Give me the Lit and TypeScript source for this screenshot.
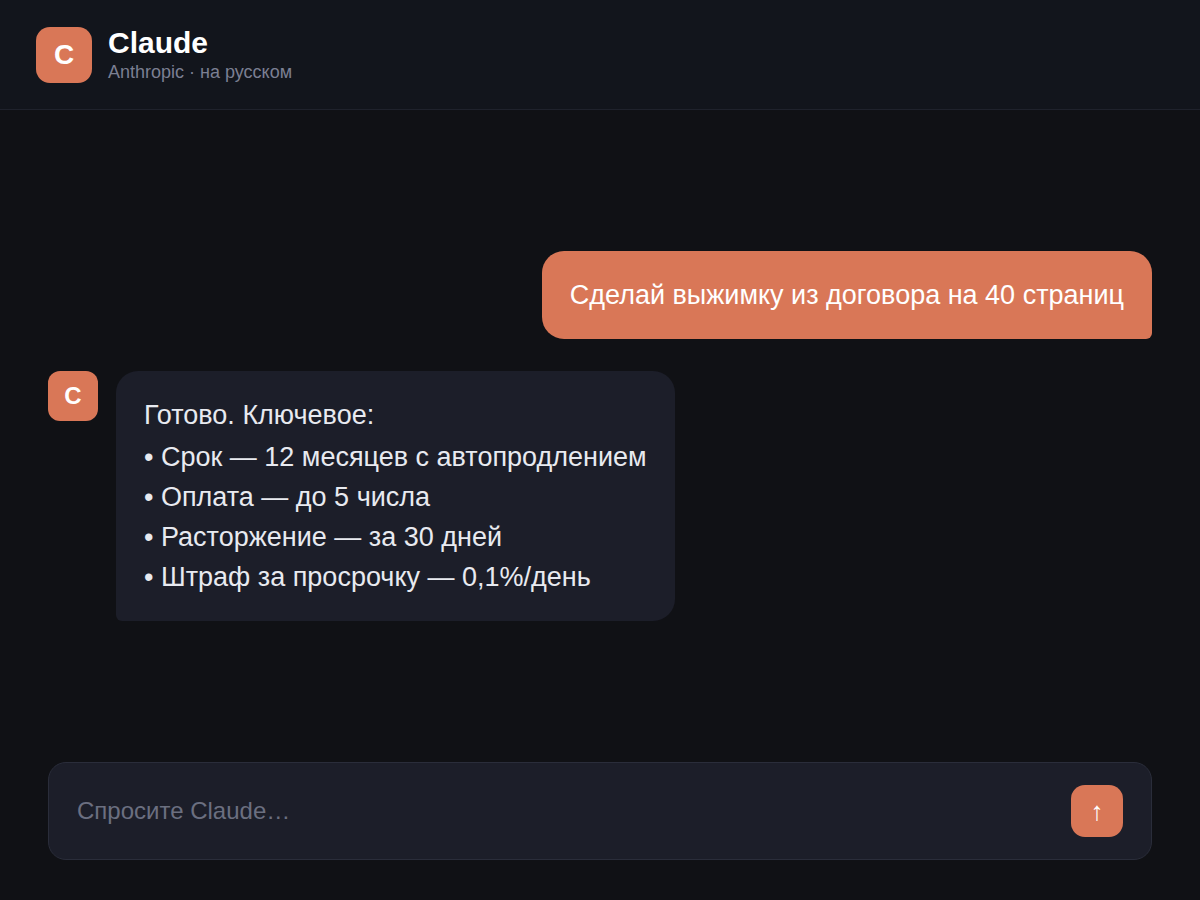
import { LitElement, html, css } from "lit";
import { customElement, state } from "lit/decorators.js";

interface Message {
  from: "user" | "assistant";
  text: string;
  points?: string[];
}

@customElement("chat-message")
class ChatMessage extends LitElement {
  static properties = { message: { attribute: false } };
  declare message: Message;

  static styles = css`
    :host {
      display: block;
    }
    .row {
      display: flex;
      align-items: flex-start;
      gap: 18px;
    }
    .row.user {
      justify-content: flex-end;
    }
    .avatar {
      flex: none;
      display: grid;
      place-items: center;
      width: 50px;
      height: 50px;
      border-radius: 12px;
      background: #d97757;
      color: #fff;
      font-size: 24px;
      font-weight: 700;
    }
    .bubble {
      max-width: 78%;
      box-sizing: border-box;
      padding: 24px 28px;
      border-radius: 22px;
      font-size: 27px;
      line-height: 40px;
    }
    .user .bubble {
      background: #d97757;
      color: #fff;
      border-bottom-right-radius: 6px;
    }
    .assistant .bubble {
      background: #1c1e29;
      color: #e8eaf0;
      border-bottom-left-radius: 6px;
    }
    .text {
      margin: 0;
    }
    .points {
      list-style: none;
      margin: 2px 0 0;
      padding: 0;
    }
  `;

  render() {
    const { from, text, points } = this.message;
    return html`
      <article class="row ${from}">
        ${from === "assistant" ? html`<div class="avatar" aria-hidden="true">C</div>` : ""}
        <div class="bubble">
          <p class="text">${text}</p>
          ${points
            ? html`<ul class="points">
                ${points.map((point) => html`<li>• ${point}</li>`)}
              </ul>`
            : ""}
        </div>
      </article>
    `;
  }
}

@customElement("app-root")
class AppRoot extends LitElement {
  static styles = css`
    :host {
      display: flex;
      flex-direction: column;
      min-height: 100vh;
      box-sizing: border-box;
      background: #101115;
      color: #e8eaf0;
      font-family: "Liberation Sans", Arial, sans-serif;
    }
    .header {
      display: flex;
      align-items: center;
      gap: 16px;
      padding: 27px 36px 26px;
      border-bottom: 1px solid #1f222c;
      background: #12151c;
    }
    .logo {
      flex: none;
      display: grid;
      place-items: center;
      width: 56px;
      height: 56px;
      border-radius: 14px;
      background: #d97757;
      color: #fff;
      font-size: 28px;
      font-weight: 700;
    }
    .title {
      margin: 0;
      color: #fff;
      font-size: 30px;
      line-height: 32px;
      font-weight: 700;
    }
    .subtitle {
      margin: 0;
      padding-top: 2px;
      color: #7b7f92;
      font-size: 18px;
      line-height: 22px;
    }
    .thread {
      flex: 1;
      display: flex;
      flex-direction: column;
      justify-content: center;
      gap: 32px;
      padding: 0 48px;
    }
    .composer {
      display: flex;
      align-items: center;
      gap: 16px;
      margin: 0 48px 40px;
      padding: 22px 28px;
      border: 1px solid #2a2d3a;
      border-radius: 18px;
      background: #1c1e29;
    }
    .field {
      flex: 1;
      min-width: 0;
      padding: 0;
      border: 0;
      outline: 0;
      background: none;
      color: #e8eaf0;
      font: inherit;
      font-size: 24px;
    }
    .field::placeholder {
      color: #6b6f80;
      opacity: 1;
    }
    .send {
      flex: none;
      display: grid;
      place-items: center;
      width: 52px;
      height: 52px;
      padding: 0;
      border: 0;
      border-radius: 14px;
      background: #d97757;
      color: #fff;
      font: inherit;
      font-size: 26px;
      cursor: pointer;
    }
  `;

  @state() private messages: Message[] = [
    { from: "user", text: "Сделай выжимку из договора на 40 страниц" },
    {
      from: "assistant",
      text: "Готово. Ключевое:",
      points: [
        "Срок — 12 месяцев с автопродлением",
        "Оплата — до 5 числа",
        "Расторжение — за 30 дней",
        "Штраф за просрочку — 0,1%/день",
      ],
    },
  ];

  private submit(event: Event) {
    event.preventDefault();
    const field = this.renderRoot.querySelector<HTMLInputElement>(".field")!;
    const text = field.value.trim();
    if (!text) return;
    this.messages = [...this.messages, { from: "user", text }];
    field.value = "";
  }

  render() {
    return html`
      <header class="header">
        <div class="logo" aria-hidden="true">C</div>
        <div>
          <h1 class="title">Claude</h1>
          <p class="subtitle">Anthropic · на русском</p>
        </div>
      </header>
      <main class="thread">
        ${this.messages.map((m) => html`<chat-message .message=${m}></chat-message>`)}
      </main>
      <form class="composer" @submit=${this.submit}>
        <input class="field" type="text" placeholder="Спросите Claude…" aria-label="Спросите Claude…" />
        <button class="send" type="submit" aria-label="Отправить">↑</button>
      </form>
    `;
  }
}
